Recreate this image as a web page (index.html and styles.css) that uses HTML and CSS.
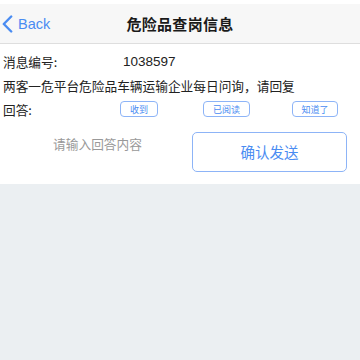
FILE: index.html
```html
<!DOCTYPE html>
<html>
<head>
<meta charset="utf-8">
<link rel="stylesheet" href="styles.css">
</head>
<body>
<div class="status"></div>
<header class="nav">
  <a class="back">
    <svg class="chev" width="11" height="18" viewBox="0 0 11 18"><path d="M9.2 1.5 L1.8 9 L9.2 16.5" fill="none" stroke="#4a8cf2" stroke-width="2.4" stroke-linecap="round" stroke-linejoin="round"/></svg>
    <span>Back</span>
  </a>
  <h1 class="title">危险品查岗信息</h1>
</header>
<main class="card">
  <div class="row">
    <span class="label w1">消息编号:</span>
    <span class="num">1038597</span>
  </div>
  <div class="row msg">两客一危平台危险品车辆运输企业每日问询，请回复</div>
  <div class="row answers">
    <span class="label w2">回答:</span>
    <span class="tag t1">收到</span>
    <span class="tag t2">已阅读</span>
    <span class="tag t3">知道了</span>
  </div>
  <div class="send">
    <div class="input">请输入回答内容</div>
    <button class="confirm">确认发送</button>
  </div>
</main>
</body>
</html>
```
FILE: styles.css
```css
html, body { margin: 0; padding: 0; }
body {
  width: 360px;
  height: 360px;
  background: #ebeff2;
  font-family: "Noto Sans CJK SC", "Noto Sans", sans-serif;
  color: #222;
  overflow: hidden;
}
.status { height: 4px; background: #fff; }
.nav {
  height: 39px;
  background: #f7f7f7;
  border-bottom: 1px solid #dedede;
  display: flex;
  align-items: center;
  justify-content: center;
  position: relative;
}
.back {
  position: absolute;
  left: 2px;
  top: 0;
  height: 39px;
  display: flex;
  align-items: center;
  gap: 5px;
  color: #4a8cf2;
  font-family: "Liberation Sans", Arial, sans-serif;
  font-size: 14.5px;
}
.chev { display: block; }
.title {
  margin: 0;
  font-size: 15px;
  font-weight: 700;
  color: #1a1a1a;
  letter-spacing: 0.3px;
}
.card {
  background: #fff;
  padding: 5px 0 12px 3px;
}
.row {
  height: 24px;
  display: flex;
  align-items: center;
  font-size: 12.7px;
  color: #222;
}
.w1 { width: 120px; }
.w2 { width: 117px; }
.num {
  font-family: "Liberation Sans", Arial, sans-serif;
  font-size: 13.5px;
}
.tag {
  box-sizing: border-box;
  height: 16px;
  border: 1.5px solid #8db4f7;
  border-radius: 4px;
  color: #4a8cf2;
  font-size: 9px;
  display: flex;
  align-items: center;
  justify-content: center;
  line-height: 1;
}
.t1 { width: 38px; }
.t2 { width: 47px; margin-left: 45px; }
.t3 { width: 46px; margin-left: 42px; }
.send {
  display: grid;
  grid-template-columns: 189px 155px;
  align-items: start;
  margin-top: 11px;
}
.input {
  text-align: center;
  color: #999;
  font-size: 12.7px;
  padding-top: 2px;
}
.confirm {
  box-sizing: border-box;
  height: 40px;
  background: #fff;
  border: 1.5px solid #8db4f7;
  border-radius: 5px;
  color: #4a8cf2;
  font-family: "Noto Sans CJK SC", sans-serif;
  font-size: 14.5px;
  padding: 0 0 2px;
}
```
